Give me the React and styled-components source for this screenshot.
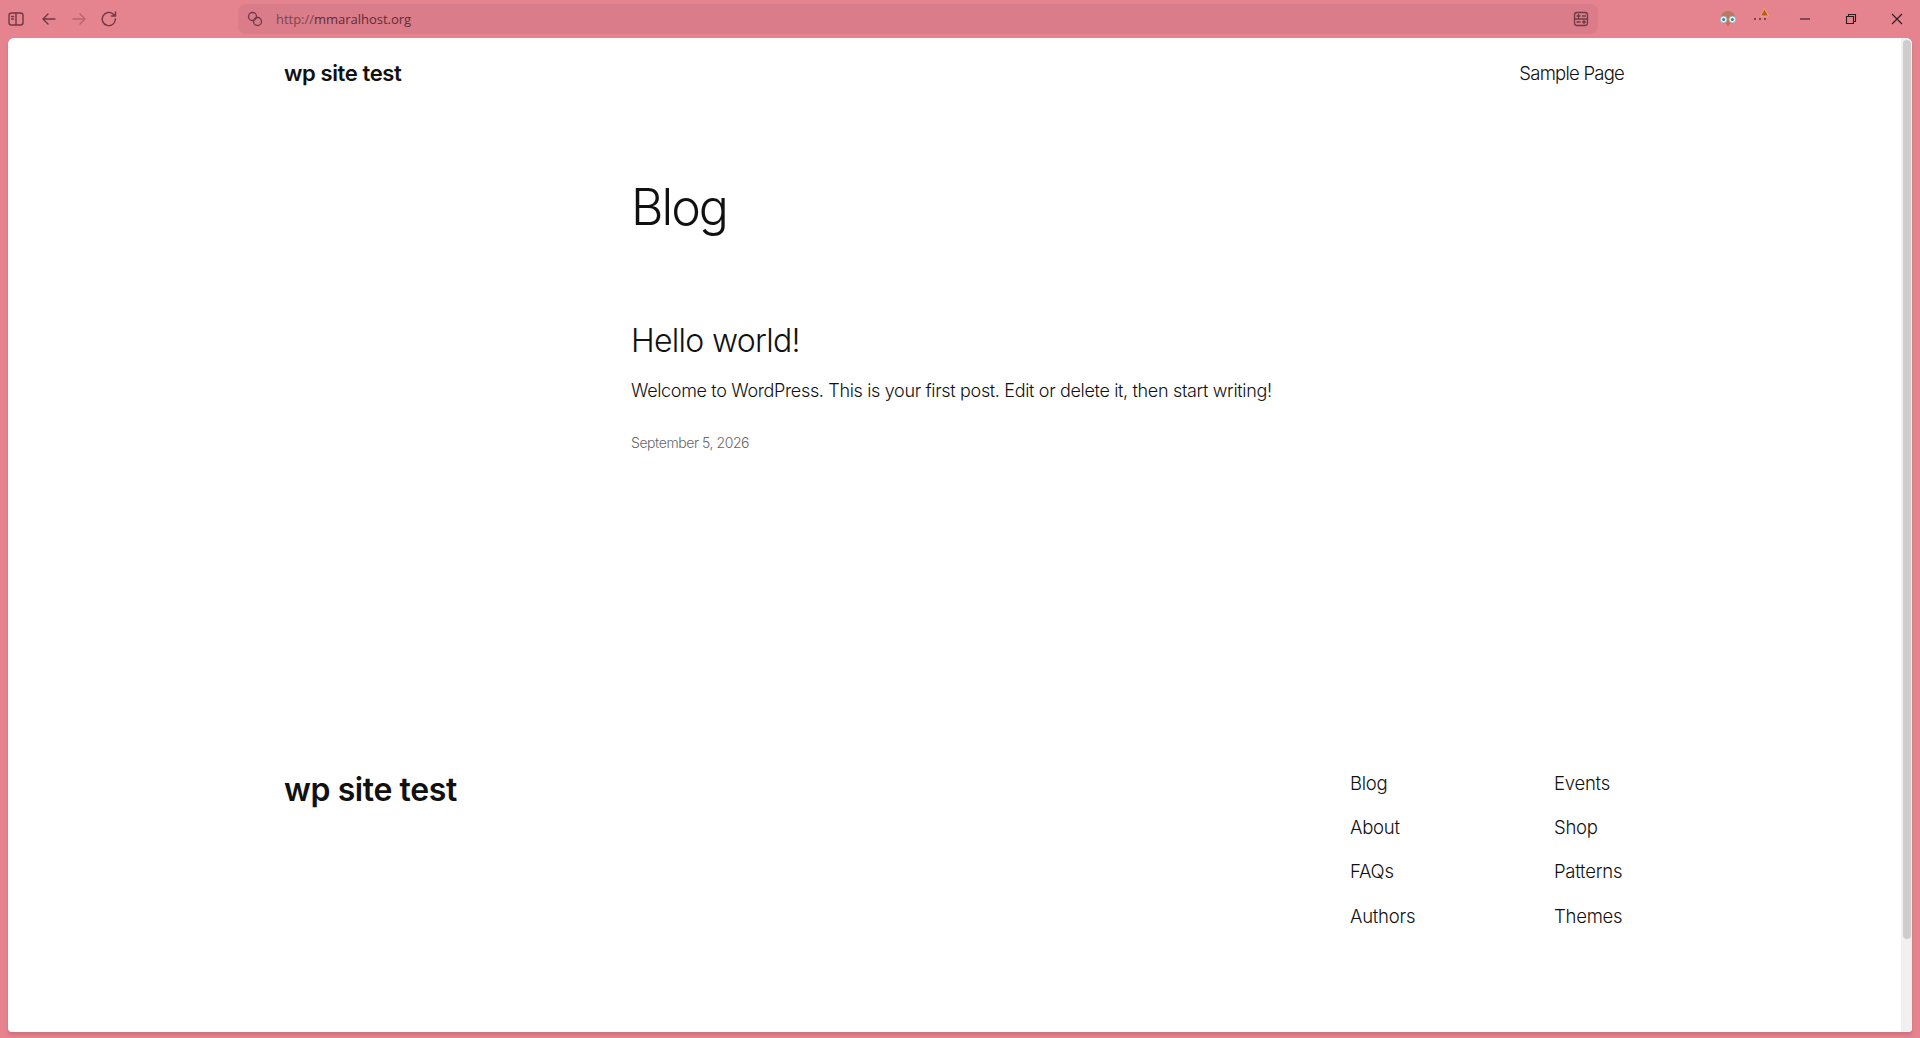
import React from "react";
import styled, { createGlobalStyle } from "styled-components";

const Global = createGlobalStyle`
  html, body { margin: 0; padding: 0; height: 100%; overflow: hidden; }
  body { font-family: "Inter", "Liberation Sans", sans-serif; color: #111; background: #e5838f; }
  #root { height: 100%; }
  * { box-sizing: border-box; }
`;

const Frame = styled.div`
  width: 1920px; height: 1038px; display: flex; flex-direction: column;
  background: #e5838f; overflow: hidden;
`;
const TitleBar = styled.header`
  height: 38px; flex: none; display: flex; align-items: center; position: relative;
`;
const NavGroup = styled.div`
  display: flex; align-items: center; width: 238px; padding-left: 6px; gap: 10px; height: 100%;
  & > :first-child { margin-right: 2.5px; }
`;
const ChromeIcon = styled.svg`
  width: 20px; height: 20px; flex: none; fill: none; stroke: #6e3a43;
  stroke-width: ${p => p.$thin ? 1.3 : 1.4}; stroke-linecap: round; stroke-linejoin: round;
  opacity: ${p => (p.$dim ? 0.4 : 1)};
`;
const AddressBar = styled.div`
  width: 1360px; height: 30px; border-radius: 8px; background: #da7c89;
  display: flex; align-items: center; padding: 0 7px 0 6.5px;
`;
const Url = styled.span`
  margin-left: 11.5px; flex: 1; font: 400 13px "Open Sans", sans-serif; color: #5a2f38; letter-spacing: -0.02px;
`;
const UrlScheme = styled.span` opacity: .72; `;
const WinGroup = styled.div`
  display: flex; align-items: center; margin-left: 120px; height: 100%;
`;
const AvatarIcon = styled.svg`
  width: 20px; height: 18px; flex: none;
`;
const AlertIcon = styled.svg`
  width: 20px; height: 22px; flex: none; margin-left: 14px;
`;
const WinIcon = styled.svg`
  width: 16px; height: 16px; fill: none; stroke: #2d1c20; stroke-width: 1.1; flex: none;
`;
const WinControls = styled.div` display: flex; margin-left: 10px; `;
const WinSlot = styled.div` width: 46px; display: flex; justify-content: center; `;
const Viewport = styled.main`
  flex: 1; margin: 0 8px 6px; position: relative; background: #fff; border-radius: 6px 6px 4px 4px;
  box-shadow: 0 3px 3px #d07381; overflow: hidden;
`;
const Scrollbar = styled.div`
  position: absolute; top: 0; right: 0; width: 11px; height: 100%; background: #f0f0f0;
`;
const Thumb = styled.div`
  margin: 2px auto 0; width: 8px; height: 899px; border-radius: 4px; background: #cdcdcd;
`;
const Container = styled.div`
  width: 1340px; margin-left: 276px;
`;
const SiteHeader = styled.div`
  display: flex; justify-content: space-between; align-items: center; height: 70px;
`;
const SiteTitle = styled.a`
  font-weight: 600; font-size: 22px; letter-spacing: -0.4px; color: #111;
`;
const HeaderLink = styled.a`
  font-weight: 300; font-size: 18.5px; letter-spacing: -0.76px; color: #111;
`;
const Content = styled.section`
  padding-left: 347px; padding-top: 68px; height: 659.5px;
`;
const PageTitle = styled.h1`
  margin: 0; font-weight: 300; font-size: 50px; line-height: 62.4px; letter-spacing: -2px; color: #111;
`;
const PostTitle = styled.h2`
  margin: 84px 0 0; font-weight: 300; font-size: 32px; line-height: 1.2; letter-spacing: -.7px; color: #111;
`;
const Excerpt = styled.p`
  margin: 17px 0 0; font-weight: 300; font-size: 18px; line-height: 26px; letter-spacing: -.34px; color: #111;
`;
const PostDate = styled.p`
  margin: 28px 0 0; font-weight: 300; font-size: 14px; line-height: 21px; letter-spacing: -.43px; color: #666;
`;
const Footer = styled.footer`
  display: flex; justify-content: space-between; align-items: flex-start;
`;
const FooterTitle = styled.div`
  font-weight: 600; font-size: 32px; line-height: 44px; letter-spacing: -.4px; color: #111;
`;
const FooterNav = styled.nav`
  display: grid; grid-template-columns: 204px 70px; grid-auto-rows: 44.4px; margin-top: 1px;
`;
const FooterLink = styled.a`
  font-weight: 300; font-size: 18.5px; line-height: 28px; letter-spacing: -.25px; color: #111;
`;

const links = ["Blog", "Events", "About", "Shop", "FAQs", "Patterns", "Authors", "Themes"];

export default function App() {
  return (
    <Frame>
      <Global />
      <TitleBar>
        <NavGroup>
          <ChromeIcon viewBox="0 0 20 20">
            <rect x="3" y="4" width="14" height="12" rx="2.5" />
            <path d="M10 4v12M5.6 7.5h2M5.6 10h2" />
          </ChromeIcon>
          <ChromeIcon viewBox="0 0 20 20"><path d="M16 10H4.5M9 5l-5 5 5 5" /></ChromeIcon>
          <ChromeIcon viewBox="0 0 20 20" $dim><path d="M4 10h11.5M11 5l5 5-5 5" /></ChromeIcon>
          <ChromeIcon viewBox="0 0 20 20">
            <path d="M16.4 10a6.6 6.6 0 1 1-2-4.7L16.5 7M16.5 3v4h-4" />
          </ChromeIcon>
        </NavGroup>
        <AddressBar>
          <ChromeIcon viewBox="0 0 20 20" $thin>
            <circle cx="7.5" cy="7.5" r="4" />
            <circle cx="12.5" cy="12.5" r="4" />
          </ChromeIcon>
          <Url><UrlScheme>http://</UrlScheme>mmaralhost.org</Url>
          <ChromeIcon viewBox="0 0 20 20" $thin>
            <rect x="3.5" y="3.5" width="13" height="13" rx="2.5" />
            <path d="M3.5 10h13M6 7h3M7.5 5.5v3M11.5 7h3M6 13h3M11.5 13h3M13 11.5v3" />
          </ChromeIcon>
        </AddressBar>
        <WinGroup>
          <AvatarIcon viewBox="0 0 20 18">
            <ellipse cx="10" cy="7" rx="7" ry="6" fill="#b9795f" />
            <path d="M6.5 12l3.5 4.5 3.5-4.5z" fill="#d9664f" />
            <circle cx="5.6" cy="9.5" r="3.5" fill="#e9f1f3" stroke="#8ba0a6" strokeWidth=".8" />
            <circle cx="14.4" cy="9.5" r="3.5" fill="#e9f1f3" stroke="#8ba0a6" strokeWidth=".8" />
            <circle cx="5.6" cy="9.5" r="1.5" fill="#3f7f95" />
            <circle cx="14.4" cy="9.5" r="1.5" fill="#3f7f95" />
          </AvatarIcon>
          <AlertIcon viewBox="0 0 20 22">
            <circle cx="3" cy="11" r="1" fill="#5a3038" />
            <circle cx="8" cy="11" r="1" fill="#5a3038" />
            <circle cx="13" cy="11" r="1" fill="#5a3038" />
            <path d="M12.5.5 8.5 8h8z" fill="#b85f13" stroke="#f0b98f" strokeWidth=".8" strokeLinejoin="round" />
          </AlertIcon>
          <WinControls>
            <WinSlot><WinIcon viewBox="0 0 16 16"><path d="M3 8h10" /></WinIcon></WinSlot>
            <WinSlot><WinIcon viewBox="0 0 16 16"><path d="M3.5 5.5h7V12.5h-7zM5.5 5.5V3.5h7v7h-2" /></WinIcon></WinSlot>
            <WinSlot><WinIcon viewBox="0 0 16 16"><path d="M3 3l10 10M13 3L3 13" /></WinIcon></WinSlot>
          </WinControls>
        </WinGroup>
      </TitleBar>
      <Viewport>
        <Scrollbar><Thumb /></Scrollbar>
        <Container>
          <SiteHeader>
            <SiteTitle>wp site test</SiteTitle>
            <HeaderLink>Sample Page</HeaderLink>
          </SiteHeader>
          <Content>
            <PageTitle>Blog</PageTitle>
            <PostTitle>Hello world!</PostTitle>
            <Excerpt>Welcome to WordPress. This is your first post. Edit or delete it, then start writing!</Excerpt>
            <PostDate>September 5, 2026</PostDate>
          </Content>
          <Footer>
            <FooterTitle>wp site test</FooterTitle>
            <FooterNav>
              {links.map(l => <FooterLink key={l}>{l}</FooterLink>)}
            </FooterNav>
          </Footer>
        </Container>
      </Viewport>
    </Frame>
  );
}
